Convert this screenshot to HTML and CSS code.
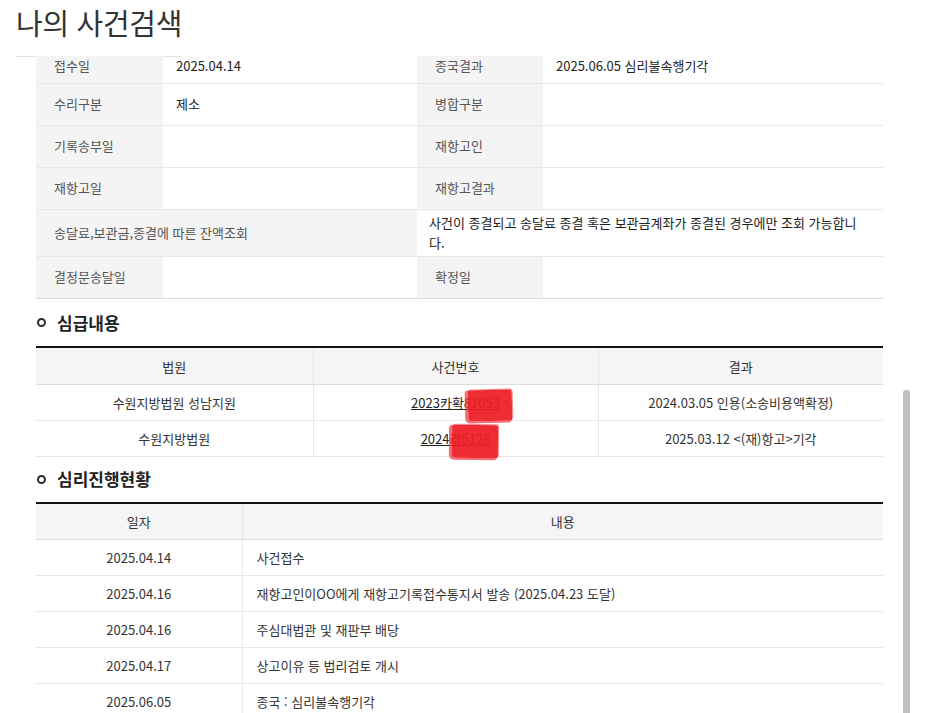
FILE: index.html
```html
<!DOCTYPE html>
<html lang="ko">
<head>
  <meta charset="UTF-8">
  <meta name="viewport" content="width=device-width, initial-scale=1.0">
  <title>나의 사건검색</title>
  <link rel="stylesheet" href="styles.css">
</head>
<body>

  <div class="modal">
    <div class="modal-header">
      <h1 class="modal-title">나의 사건검색</h1>
    </div>

    <div class="modal-body">
      <div class="modal-content">

        <table class="info-table">
          <colgroup>
            <col class="c-label"><col class="c-value"><col class="c-label2"><col>
          </colgroup>
          <tr class="first-row">
            <th>접수일</th><td>2025.04.14</td>
            <th>종국결과</th><td>2025.06.05 심리불속행기각</td>
          </tr>
          <tr>
            <th>수리구분</th><td>제소</td>
            <th>병합구분</th><td></td>
          </tr>
          <tr>
            <th>기록송부일</th><td></td>
            <th>재항고인</th><td></td>
          </tr>
          <tr>
            <th>재항고일</th><td></td>
            <th>재항고결과</th><td></td>
          </tr>
          <tr>
            <th colspan="2">송달료,보관금,종결에 따른 잔액조회</th>
            <td colspan="2" class="notice">사건이 종결되고 송달료 종결 혹은 보관금계좌가 종결된 경우에만 조회 가능합니다.</td>
          </tr>
          <tr>
            <th>결정문송달일</th><td></td>
            <th>확정일</th><td></td>
          </tr>
        </table>

        <h3 class="section-title">심급내용</h3>
        <table class="grid-table instance">
          <colgroup>
            <col class="c-court"><col class="c-case"><col>
          </colgroup>
          <tr>
            <th>법원</th><th>사건번호</th><th>결과</th>
          </tr>
          <tr>
            <td>수원지방법원 성남지원</td>
            <td><span class="case-no"><a href="#">2023카확81053</a><span class="redact redact-1"></span></span></td>
            <td>2024.03.05 인용(소송비용액확정)</td>
          </tr>
          <tr>
            <td>수원지방법원</td>
            <td><span class="case-no"><a href="#">2024라5128</a><span class="redact redact-2"></span></span></td>
            <td>2025.03.12 &lt;(재)항고&gt;기각</td>
          </tr>
        </table>

        <h3 class="section-title section-next">심리진행현황</h3>
        <table class="grid-table progress">
          <colgroup>
            <col class="c-date"><col>
          </colgroup>
          <tr>
            <th>일자</th><th>내용</th>
          </tr>
          <tr><td>2025.04.14</td><td class="left">사건접수</td></tr>
          <tr><td>2025.04.16</td><td class="left">재항고인이OO에게 재항고기록접수통지서 발송 (2025.04.23 도달)</td></tr>
          <tr><td>2025.04.16</td><td class="left">주심대법관 및 재판부 배당</td></tr>
          <tr><td>2025.04.17</td><td class="left">상고이유 등 법리검토 개시</td></tr>
          <tr><td>2025.06.05</td><td class="left">종국 : 심리불속행기각</td></tr>
        </table>

      </div>
      <div class="scrollbar"><div class="scroll-thumb"></div></div>
    </div>
  </div>

</body>
</html>
```

FILE: styles.css
```css
html, body {
  margin: 0;
  padding: 0;
  background: #fff;
}

body {
  font-family: "Noto Sans CJK KR", "Noto Sans", sans-serif;
  color: #222;
  font-size: 13px;
}

.modal {
  width: 938px;
  height: 713px;
  display: flex;
  flex-direction: column;
  overflow: hidden;
}

.modal-header {
  height: 56px;
  padding-left: 16px;
  flex-shrink: 0;
}

.modal-title {
  display: inline-block;
  margin: 0;
  height: 57px;
  line-height: 44px;
  font-size: 29px;
  font-weight: 400;
  color: #333;
  letter-spacing: -0.3px;
  border-bottom: 1px solid #e3e3e3;
  box-sizing: border-box;
}

.modal-body {
  position: relative;
  flex: 1;
  overflow: hidden;
}

.modal-content {
  width: 847px;
  margin: -13px 0 0 36px;
}

table {
  width: 100%;
  border-collapse: collapse;
  table-layout: fixed;
}

/* 기본정보 */
.info-table .c-label { width: 127px; }
.info-table .c-value { width: 254px; }
.info-table .c-label2 { width: 126px; }

.info-table th,
.info-table td {
  height: 42px;
  padding: 3px 12px 3px 13px;
  line-height: 20px;
  text-align: left;
  vertical-align: middle;
  border-bottom: 1px solid #e8e8e8;
  box-sizing: border-box;
}

.info-table .first-row th,
.info-table .first-row td {
  height: 40px;
  padding-top: 6px;
  padding-bottom: 0;
}

.info-table th {
  background: #f4f4f4;
  color: #555;
  font-weight: 400;
  padding-left: 18px;
}

.info-table td {
  color: #222;
}

.info-table td.notice {
  padding-left: 12px;
  padding-right: 26px;
}

.info-table tr:last-child th,
.info-table tr:last-child td {
  border-bottom: 1px solid #dcdcdc;
}

/* 섹션 제목 */
.section-title {
  display: flex;
  align-items: center;
  gap: 11px;
  margin: 12px 0 11px 1px;
  line-height: 24px;
  font-size: 17px;
  font-weight: 700;
  color: #222;
}

.section-title.section-next {
  margin-top: 10px;
}

.section-title::before {
  content: "";
  width: 9px;
  height: 9px;
  border: 2px solid #2a2a2a;
  border-radius: 50%;
  box-sizing: border-box;
}

/* 목록 테이블 */
.grid-table {
  border-top: 2px solid #111;
}

.grid-table .c-court { width: 277px; }
.grid-table .c-case { width: 285px; }
.grid-table .c-date { width: 206px; }

.grid-table th,
.grid-table td {
  height: 36px;
  padding: 0 12px;
  text-align: center;
  vertical-align: middle;
  color: #333;
  border-bottom: 1px solid #e8e8e8;
  border-left: 1px solid #e8e8e8;
  box-sizing: border-box;
}

.grid-table th:first-child,
.grid-table td:first-child {
  border-left: none;
}

.grid-table th {
  background: #f5f5f5;
  font-weight: 400;
  border-bottom-color: #dcdcdc;
}

.grid-table.instance th {
  height: 38px;
  padding-top: 2px;
}

.grid-table td.left {
  text-align: left;
  padding-left: 14px;
}

.case-no {
  position: relative;
  display: inline-block;
}

.case-no a {
  color: #222;
  text-decoration: underline;
}

.redact {
  position: absolute;
  background: rgba(237, 28, 36, 0.93);
  border-radius: 2px 3px 2px 4px;
  box-shadow: -2px 1px 0 1px rgba(240, 60, 70, 0.75), 1px -1px 0 0 rgba(240, 60, 70, 0.6);
}

.redact-1 {
  left: 57px;
  top: -3px;
  width: 44px;
  height: 31px;
  transform: rotate(-1.5deg);
}

.redact-2 {
  left: 31px;
  top: -4px;
  width: 46px;
  height: 33px;
  transform: rotate(0.5deg);
}

/* 스크롤바 */
.scrollbar {
  position: absolute;
  top: 0;
  right: 28px;
  width: 7px;
  height: 100%;
}

.scroll-thumb {
  margin-top: 334px;
  height: 400px;
  background: #c1c1c1;
  border-radius: 3px 3px 0 0;
}
```
